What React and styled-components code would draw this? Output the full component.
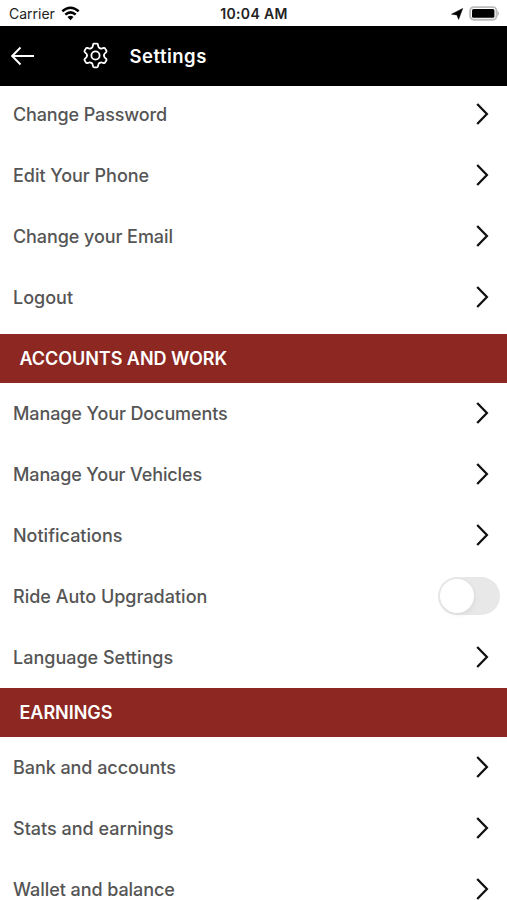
import React from 'react'
import styled, { createGlobalStyle } from 'styled-components'

const GlobalStyle = createGlobalStyle`
  * {
    box-sizing: border-box;
  }
  body {
    margin: 0;
    background: #ffffff;
    font-family: Inter, 'Liberation Sans', sans-serif;
  }
`

const Screen = styled.div`
  display: flex;
  flex-direction: column;
  width: 507px;
  height: 900px;
  overflow: hidden;
  background: #ffffff;
`

const StatusBar = styled.div`
  display: grid;
  grid-template-columns: 1fr auto 1fr;
  align-items: center;
  flex: none;
  height: 25.5px;
  padding: 2px 7px 0 9px;
  color: #222222;
  font-size: 14px;
`

const StatusGroup = styled.div`
  display: flex;
  align-items: center;
  justify-content: ${props => (props.$end ? 'flex-end' : 'flex-start')};
  gap: 6px;
`

const Clock = styled.div`
  font-weight: 600;
  letter-spacing: 0.35px;
  margin-right: 1px;
`

const Header = styled.header`
  position: relative;
  z-index: 1;
  display: flex;
  align-items: center;
  flex: none;
  height: 60.5px;
  padding-left: 11px;
  background: #000000;
  color: #ffffff;

  .gear {
    margin: 0 20.5px 0 47px;
  }
`

const Title = styled.h1`
  margin: 0;
  font-size: 18.5px;
  font-weight: 600;
  letter-spacing: 0.5px;
`

// the list is scrolled a little way under the header
const List = styled.main`
  flex: none;
  margin-top: -2.5px;
`

const Section = styled.section`
  padding-bottom: ${props => props.$gap || 0}px;
`

const SectionTitle = styled.h2`
  display: flex;
  align-items: center;
  height: 49px;
  margin: 0;
  padding-left: 19.5px;
  background: #8c2721;
  color: #ffffff;
  font-size: 18px;
  font-weight: 600;
  letter-spacing: -0.05px;
`

const Row = styled.div`
  display: flex;
  align-items: center;
  justify-content: space-between;
  height: 61px;
  padding: 0 ${props => (props.$toggle ? 7.5 : 18)}px 0 13px;
  color: #555555;
  font-size: 18px;
  font-weight: 500;
`

const Label = styled.span`
  white-space: nowrap;
  letter-spacing: ${props => props.$spacing || 0}px;
`

const Toggle = styled.div`
  display: flex;
  align-items: center;
  width: 62px;
  height: 38px;
  padding: 2px;
  border-radius: 19px;
  background: #e8e8e9;
`

const Knob = styled.div`
  width: 34px;
  height: 34px;
  border-radius: 50%;
  background: #ffffff;
  box-shadow: 1px 2px 5px rgba(0, 0, 0, 0.06);
`

const WifiIcon = () => (
  <svg width="19" height="15" viewBox="0 0 19 15">
    <g fill="none" stroke="#000" strokeWidth="2.5">
      <path d="M1.3 5.2 Q9.5 -1.8 17.7 5.2" />
      <path d="M4.3 8.6 Q9.5 4.2 14.7 8.6" />
    </g>
    <path d="M6.5 11 Q9.5 8.6 12.5 11 L9.5 14.2Z" />
  </svg>
)

const LocationIcon = () => (
  <svg width="12" height="12" viewBox="0 0 12 12">
    <path d="M11.7 0.4 L7.6 11.4 L5.9 6.9 L0.5 6.2Z" stroke="#000" strokeWidth="0.5" />
  </svg>
)

const BatteryIcon = () => (
  <svg width="31" height="15" viewBox="0 0 31 15">
    <rect x="1.1" y="1.1" width="26.4" height="12.6" rx="3.6" fill="#fff" stroke="#bcbcbc" strokeWidth="1.9" />
    <rect x="3" y="3" width="22.4" height="8.8" rx="1.6" />
    <path d="M28.4 4.4 Q31.6 7.4 28.4 10.4Z" fill="#bcbcbc" />
  </svg>
)

const BackIcon = () => (
  <svg width="24" height="20" viewBox="0 0 24 20" fill="none" stroke="#fff" strokeWidth="1.9">
    <path d="M23 10 H1.5 M9.5 1.5 L1.2 10 L9.5 18.5" />
  </svg>
)

const gearAngles = [0, 60, 120, 180, 240, 300]

const GearIcon = () => (
  <svg className="gear" width="27" height="27" viewBox="-13.5 -13.5 27 27" fill="none" stroke="#fff" strokeWidth="1.8">
    {gearAngles.map(angle => (
      <path
        key={angle}
        transform={`rotate(${angle})`}
        strokeLinejoin="round"
        strokeLinecap="round"
        d="M-4.2 -7.4 Q-3 -8 -2.8 -9.2 L-2.4 -11 Q-2.2 -11.8 -1.4 -11.8 H1.4 Q2.2 -11.8 2.4 -11 L2.8 -9.2 Q3 -8 4.2 -7.4"
      />
    ))}
    <circle r="4.1" />
  </svg>
)

const Chevron = () => (
  <svg width="13" height="24" viewBox="0 0 13 24" fill="none" stroke="#111" strokeWidth="2.3">
    <path d="M1.2 2 L10.9 12 L1.2 22" />
  </svg>
)

const Item = ({ label, toggle, spacing }) => (
  <Row $toggle={toggle}>
    <Label $spacing={spacing}>{label}</Label>
    {toggle ? (
      <Toggle>
        <Knob />
      </Toggle>
    ) : (
      <Chevron />
    )}
  </Row>
)

const App = () => (
  <Screen>
    <GlobalStyle />
    <StatusBar>
      <StatusGroup>
        Carrier
        <WifiIcon />
      </StatusGroup>
      <Clock>10:04 AM</Clock>
      <StatusGroup $end>
        <LocationIcon />
        <BatteryIcon />
      </StatusGroup>
    </StatusBar>
    <Header>
      <BackIcon />
      <GearIcon />
      <Title>Settings</Title>
    </Header>
    <List>
      <Section $gap={6}>
        <Item label="Change Password" spacing={-0.13} />
        <Item label="Edit Your Phone" spacing={-0.03} />
        <Item label="Change your Email" spacing={-0.08} />
        <Item label="Logout" />
      </Section>
      <Section>
        <SectionTitle>ACCOUNTS AND WORK</SectionTitle>
        <Item label="Manage Your Documents" spacing={-0.1} />
        <Item label="Manage Your Vehicles" spacing={-0.13} />
        <Item label="Notifications" />
        <Item label="Ride Auto Upgradation" toggle />
        <Item label="Language Settings" />
      </Section>
      <Section>
        <SectionTitle>EARNINGS</SectionTitle>
        <Item label="Bank and accounts" spacing={-0.06} />
        <Item label="Stats and earnings" />
        <Item label="Wallet and balance" spacing={-0.06} />
      </Section>
    </List>
  </Screen>
)

export default App
